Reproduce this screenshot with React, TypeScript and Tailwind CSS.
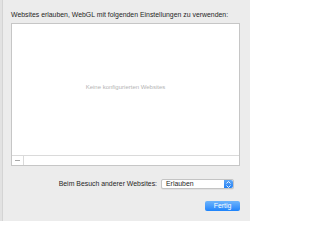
const font = { fontFamily: '"Liberation Sans", Arial, sans-serif' };

const Stepper = () => (
  <div className="flex w-[9px] flex-col items-center justify-center gap-[1px] rounded-r-[2px] bg-gradient-to-b from-[#5fa8f7] to-[#1f7ff3]">
    <svg width="5" height="3" viewBox="0 0 5 3">
      <path d="M0.5 2.5 L2.5 0.5 L4.5 2.5" stroke="white" strokeWidth="0.9" fill="none" />
    </svg>
    <svg width="5" height="3" viewBox="0 0 5 3">
      <path d="M0.5 0.5 L2.5 2.5 L4.5 0.5" stroke="white" strokeWidth="0.9" fill="none" />
    </svg>
  </div>
);

export default function App() {
  return (
    <div className="flex h-[221px] w-[250px] overflow-hidden bg-[#ececec] text-[#262626]" style={font}>
      <div className="w-[3px] shrink-0 border-r border-[#d4d4d4] bg-[#e2e2e2]" />
      <div className="flex min-w-0 flex-1 flex-col pl-[8px] pr-[10px]">
        <div className="mt-[10px] h-[10px] text-[6.9px] leading-[10px] whitespace-nowrap">
          Websites erlauben, WebGL mit folgenden Einstellungen zu verwenden:
        </div>
        <div className="mt-[3px] flex h-[143px] flex-col border border-[#c6c6c6] bg-white">
          <div className="flex flex-1 items-center justify-center pb-[5px] text-[6px] text-[#b4b4b4]">
            Keine konfigurierten Websites
          </div>
          <div className="flex h-[10px] border-t border-[#dadada]">
            <div className="flex w-[12px] items-center justify-center border-r border-[#dadada]">
              <div className="h-px w-[5px] bg-[#a8a8a8]" />
            </div>
          </div>
        </div>
        <div className="mt-[13px] flex items-center justify-end pr-[6px]">
          <span className="mr-[4px] text-[6.9px] leading-[10px]">Beim Besuch anderer Websites:</span>
          <div className="flex h-[10px] w-[73px] rounded-[2px] border border-[#c4c4c4] bg-white shadow-[0_0.5px_0.5px_rgba(0,0,0,0.1)]">
            <span className="flex-1 pl-[4px] text-[6.9px] leading-[8px]">Erlauben</span>
            <Stepper />
          </div>
        </div>
        <div className="mt-[12px] flex justify-end">
          <div className="flex h-[10px] w-[35px] items-center justify-center rounded-[2px] bg-gradient-to-b from-[#6db4fb] to-[#1b83fb] text-[6.9px] text-white">
            Fertig
          </div>
        </div>
      </div>
    </div>
  );
}
